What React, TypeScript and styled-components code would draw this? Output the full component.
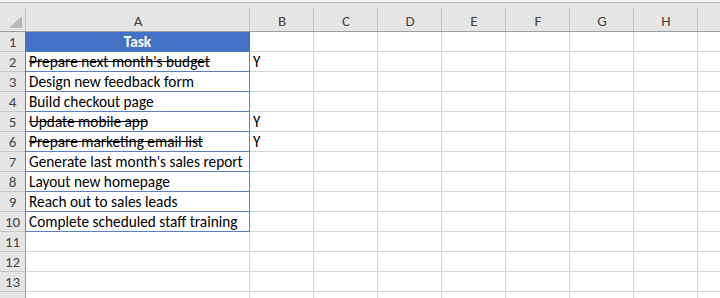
import React from 'react';
import styled, { createGlobalStyle, css } from 'styled-components';

const GlobalStyle = createGlobalStyle`
    html, body {
        margin: 0;
        padding: 0;
        background: #ffffff;
        overflow: hidden;
    }
    body {
        font-family: Carlito, Calibri, 'Liberation Sans', Arial, sans-serif;
    }
`;

const gridColumns = '26px 224px repeat(8, 64px)';

const Sheet = styled.div`
    width: 720px;
    height: 298px;
    overflow: hidden;
    display: flex;
    flex-direction: column;
`;

const TopStrip = styled.div`
    height: 2px;
    background: #f4f4f4;
    border-bottom: 1px solid #bdbdbd;
    flex: none;
`;

const HeaderRow = styled.div`
    display: grid;
    grid-template-columns: ${gridColumns};
    height: 28px;
    background: #e6e6e6;
    border-bottom: 1px solid #9e9e9e;
    flex: none;
`;

const ColHead = styled.div`
    position: relative;
    display: flex;
    align-items: center;
    justify-content: center;
    padding-top: 7px;
    font-size: 15px;
    color: #444444;
    &::after {
        content: '';
        position: absolute;
        right: 0;
        top: 5px;
        bottom: 0;
        width: 1px;
        background: #c4c4c4;
    }
`;

const Corner = styled.div`
    position: relative;
    &::after {
        content: '';
        position: absolute;
        right: 0;
        top: 5px;
        bottom: 0;
        width: 1px;
        background: #c4c4c4;
    }
`;

const CornerTriangle = styled.div`
    position: absolute;
    right: 4px;
    bottom: 3px;
    width: 13px;
    height: 12px;
    background: #b9b9b9;
    clip-path: polygon(100% 0, 100% 100%, 0 100%);
`;

const Row = styled.div`
    display: grid;
    grid-template-columns: ${gridColumns};
    height: 20px;
    flex: none;
`;

const RowNum = styled.div`
    background: #e6e6e6;
    border-right: 1px solid #9e9e9e;
    border-bottom: 1px solid #c6c6c6;
    display: flex;
    align-items: center;
    justify-content: center;
    font-size: 15px;
    color: #444444;
    padding-top: 1px;
    box-sizing: border-box;
`;

const Cell = styled.div<{ $table?: boolean; $head?: boolean; $done?: boolean }>`
    box-sizing: border-box;
    border-right: 1px solid #d4d4d4;
    border-bottom: 1px solid #d4d4d4;
    display: flex;
    align-items: flex-end;
    padding: 0 3px 0;
    font-size: 15.3px;
    line-height: 19px;
    color: #000000;
    white-space: nowrap;
    overflow: hidden;
    ${(p) => p.$table && css`
        border-right-color: #5b7fc2;
        border-bottom-color: #5b7fc2;
        margin-left: -1px;
        border-left: 1px solid #5b7fc2;
    `}
    ${(p) => p.$head && css`
        background: #4472c4;
        color: #ffffff;
        font-weight: bold;
        justify-content: center;
        border-color: #4472c4;
    `}
    ${(p) => p.$done && css`
        text-decoration: line-through;
    `}
`;

const columns = ['A', 'B', 'C', 'D', 'E', 'F', 'G', 'H', ''];

const tasks: { name: string; done: boolean }[] = [
    { name: "Prepare next month's budget", done: true },
    { name: 'Design new feedback form', done: false },
    { name: 'Build checkout page', done: false },
    { name: 'Update mobile app', done: true },
    { name: 'Prepare marketing email list', done: true },
    { name: "Generate last month's sales report", done: false },
    { name: 'Layout new homepage', done: false },
    { name: 'Reach out to sales leads', done: false },
    { name: 'Complete scheduled staff training', done: false },
];

const EmptyCells = ({ count }: { count: number }) => (
    <>
        {Array.from({ length: count }).map((_, i) => (
            <Cell key={i} />
        ))}
    </>
);

export default function App() {
    return (
        <>
            <GlobalStyle />
            <Sheet>
                <TopStrip />
                <HeaderRow>
                    <Corner>
                        <CornerTriangle />
                    </Corner>
                    {columns.map((c, i) => (
                        <ColHead key={i}>{c}</ColHead>
                    ))}
                </HeaderRow>
                <Row>
                    <RowNum>1</RowNum>
                    <Cell $table $head>Task</Cell>
                    <EmptyCells count={8} />
                </Row>
                {tasks.map((t, i) => (
                    <Row key={t.name}>
                        <RowNum>{i + 2}</RowNum>
                        <Cell $table $done={t.done}>{t.name}</Cell>
                        <Cell>{t.done ? 'Y' : ''}</Cell>
                        <EmptyCells count={7} />
                    </Row>
                ))}
                {[11, 12, 13, 14].map((n) => (
                    <Row key={n}>
                        <RowNum>{n}</RowNum>
                        <EmptyCells count={9} />
                    </Row>
                ))}
            </Sheet>
        </>
    );
}
